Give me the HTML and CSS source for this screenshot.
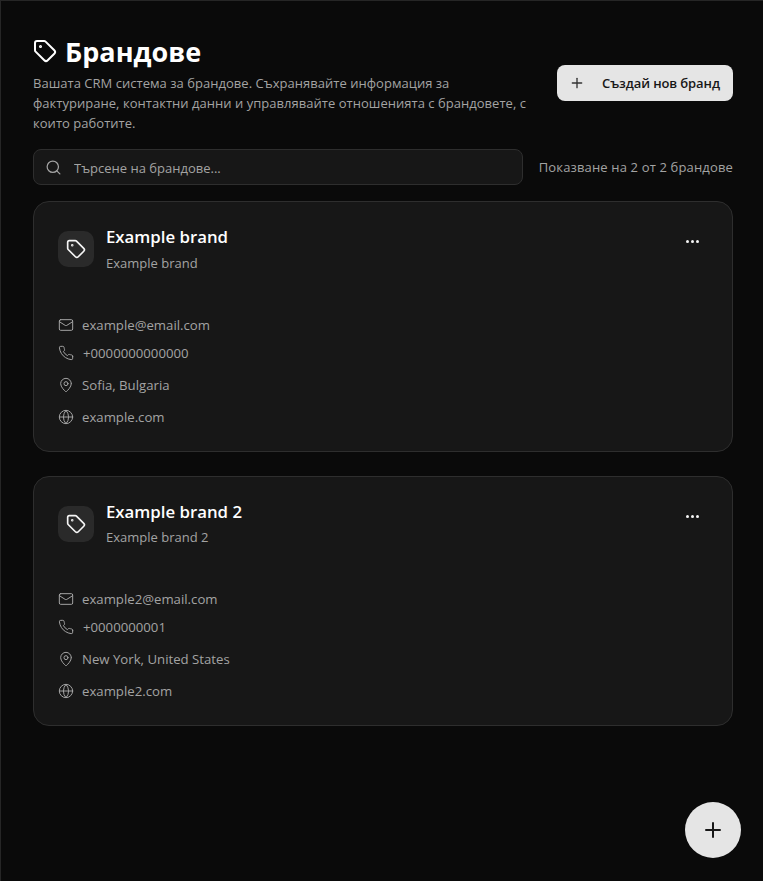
FILE: index.html
```html
<!DOCTYPE html>
<html lang="bg">
<head>
    <meta name="viewport" content="width=device-width, initial-scale=1.0">
    <title>Брандове</title>
    <link rel="stylesheet" href="styles.css">
</head>
<body>
    <svg class="icon-defs" width="0" height="0">
        <symbol id="i-tag" viewBox="0 0 24 24"><path d="M12.586 2.586A2 2 0 0 0 11.172 2H4a2 2 0 0 0-2 2v7.172a2 2 0 0 0 .586 1.414l8.704 8.704a2.426 2.426 0 0 0 3.42 0l6.58-6.58a2.426 2.426 0 0 0 0-3.42z"/><circle cx="7.5" cy="7.5" r=".5" fill="currentColor"/></symbol>
        <symbol id="i-mail" viewBox="0 0 24 24"><rect x="2" y="4" width="20" height="16" rx="2"/><path d="m22 7-8.97 5.7a1.94 1.94 0 0 1-2.06 0L2 7"/></symbol>
        <symbol id="i-phone" viewBox="0 0 24 24"><path d="M22 16.92v3a2 2 0 0 1-2.18 2 19.79 19.79 0 0 1-8.63-3.07 19.5 19.5 0 0 1-6-6 19.79 19.79 0 0 1-3.07-8.67A2 2 0 0 1 4.11 2h3a2 2 0 0 1 2 1.72 12.84 12.84 0 0 0 .7 2.81 2 2 0 0 1-.45 2.11L8.09 9.91a16 16 0 0 0 6 6l1.27-1.27a2 2 0 0 1 2.11-.45 12.84 12.84 0 0 0 2.81.7A2 2 0 0 1 22 16.92z"/></symbol>
        <symbol id="i-pin" viewBox="0 0 24 24"><path d="M20 10c0 4.993-5.539 10.193-7.399 11.799a1 1 0 0 1-1.202 0C9.539 20.193 4 14.993 4 10a8 8 0 0 1 16 0"/><circle cx="12" cy="10" r="3"/></symbol>
        <symbol id="i-globe" viewBox="0 0 24 24"><circle cx="12" cy="12" r="10"/><path d="M12 2a14.5 14.5 0 0 0 0 20 14.5 14.5 0 0 0 0-20"/><path d="M2 12h20"/></symbol>
        <symbol id="i-plus" viewBox="0 0 24 24"><path d="M5 12h14"/><path d="M12 5v14"/></symbol>
        <symbol id="i-search" viewBox="0 0 24 24"><circle cx="11" cy="11" r="8"/><path d="m21 21-4.3-4.3"/></symbol>
    </svg>

    <div class="page">
        <div class="top">
            <div class="top-text">
                <h1 class="title">
                    <svg class="title-icon"><use href="#i-tag"/></svg>
                    <span>Брандове</span>
                </h1>
                <p class="intro">Вашата CRM система за брандове. Съхранявайте информация за фактуриране, контактни данни и управлявайте отношенията с брандовете, с които работите.</p>
            </div>
            <button class="create-btn">
                <svg class="create-icon"><use href="#i-plus"/></svg>
                <span>Създай нов бранд</span>
            </button>
        </div>

        <div class="filter">
            <label class="search">
                <svg class="search-icon"><use href="#i-search"/></svg>
                <input class="search-input" type="text" placeholder="Търсене на брандове...">
            </label>
            <span class="count">Показване на 2 от 2 брандове</span>
        </div>

        <div class="card">
            <div class="card-head">
                <div class="brand-icon"><svg class="brand-svg"><use href="#i-tag"/></svg></div>
                <div class="brand-names">
                    <h2 class="brand-name">Example brand</h2>
                    <p class="brand-sub">Example brand</p>
                </div>
                <button class="more" aria-label="Още"><i></i><i></i><i></i></button>
            </div>
            <ul class="contacts">
                <li class="row row-mail"><svg class="row-icon"><use href="#i-mail"/></svg>example@email.com</li>
                <li class="row row-phone"><svg class="row-icon"><use href="#i-phone"/></svg>+0000000000000</li>
                <li class="row"><svg class="row-icon"><use href="#i-pin"/></svg>Sofia, Bulgaria</li>
                <li class="row"><svg class="row-icon"><use href="#i-globe"/></svg>example.com</li>
            </ul>
        </div>

        <div class="card">
            <div class="card-head">
                <div class="brand-icon"><svg class="brand-svg"><use href="#i-tag"/></svg></div>
                <div class="brand-names">
                    <h2 class="brand-name">Example brand 2</h2>
                    <p class="brand-sub">Example brand 2</p>
                </div>
                <button class="more" aria-label="Още"><i></i><i></i><i></i></button>
            </div>
            <ul class="contacts">
                <li class="row row-mail"><svg class="row-icon"><use href="#i-mail"/></svg>example2@email.com</li>
                <li class="row row-phone"><svg class="row-icon"><use href="#i-phone"/></svg>+0000000001</li>
                <li class="row"><svg class="row-icon"><use href="#i-pin"/></svg>New York, United States</li>
                <li class="row"><svg class="row-icon"><use href="#i-globe"/></svg>example2.com</li>
            </ul>
        </div>
    </div>

    <button class="fab" aria-label="Създай"><svg class="fab-icon"><use href="#i-plus"/></svg></button>
</body>
</html>
```

FILE: styles.css
```css
* {
    margin: 0;
    padding: 0;
    box-sizing: border-box;
}
html, body {
    height: 100%;
}
body {
    background: #0a0a0a;
    border-top: 1px solid #262626;
    border-left: 1px solid #262626;
    font-family: "Open Sans", "Noto Sans", sans-serif;
    color: #a3a3a3;
    overflow: hidden;
}
svg {
    fill: none;
    stroke: currentColor;
    stroke-width: 2;
    stroke-linecap: round;
    stroke-linejoin: round;
    flex-shrink: 0;
}
.icon-defs {
    position: absolute;
}
.page {
    padding: 32px 30px 0 32px;
}
.top {
    display: flex;
    align-items: center;
    justify-content: space-between;
}
.top-text {
    width: 498px;
}
.title {
    display: flex;
    align-items: center;
    gap: 8px;
    height: 40px;
    padding-bottom: 4px;
    font-size: 27px;
    font-weight: 700;
    color: #fff;
}
.title-icon {
    width: 24px;
    height: 24px;
}
.intro {
    font-size: 13px;
    line-height: 20px;
    letter-spacing: 0.03px;
}
.create-btn {
    display: flex;
    align-items: center;
    gap: 17px;
    width: 176px;
    height: 36px;
    padding: 0 12px;
    background: #e5e5e5;
    border: none;
    border-radius: 8px;
    color: #171717;
    font-family: inherit;
    font-size: 13px;
    font-weight: 600;
    letter-spacing: -0.1px;
    white-space: nowrap;
}
.create-icon {
    width: 16px;
    height: 16px;
    color: #333;
}
.filter {
    display: flex;
    align-items: center;
    justify-content: space-between;
    margin-top: 16px;
}
.search {
    display: flex;
    align-items: center;
    gap: 12px;
    width: 490px;
    height: 36px;
    padding: 0 11px;
    background: #171717;
    border: 1px solid #2e2e2e;
    border-radius: 8px;
}
.search-icon {
    width: 17px;
    height: 17px;
    stroke-width: 1.75;
}
.search-input {
    flex: 1;
    padding-top: 1px;
    background: none;
    border: none;
    outline: none;
    font-family: inherit;
    font-size: 13px;
}
.search-input::placeholder {
    color: #a3a3a3;
    opacity: 1;
}
.count {
    font-size: 13px;
    letter-spacing: 0.15px;
    white-space: nowrap;
}
.card {
    height: 250px;
    margin-top: 24px;
    padding: 24px;
    background: #171717;
    border: 1px solid #2e2e2e;
    border-radius: 16px;
}
.filter + .card {
    margin-top: 16px;
    height: 251px;
}
.card-head {
    display: flex;
    align-items: flex-start;
    gap: 12px;
    padding-top: 5px;
}
.brand-icon {
    display: flex;
    align-items: center;
    justify-content: center;
    width: 36px;
    height: 36px;
    background: #2a2a2a;
    border-radius: 10px;
    color: #f5f5f5;
}
.brand-svg {
    width: 20px;
    height: 20px;
}
.brand-names {
    flex: 1;
}
.brand-name {
    margin-top: -6px;
    font-size: 16.8px;
    line-height: 24px;
    font-weight: 600;
    color: #fff;
}
.brand-sub {
    margin-top: 4px;
    font-size: 13px;
    line-height: 18px;
}
.filter + .card .brand-sub {
    margin-top: 5px;
}
.more {
    display: flex;
    gap: 2px;
    margin: 9px 9px 0 0;
    background: none;
    border: none;
}
.more i {
    width: 3px;
    height: 3px;
    background: #f5f5f5;
    border-radius: 50%;
}
.contacts {
    list-style: none;
    margin-top: 39px;
}
.row {
    display: flex;
    align-items: center;
    gap: 8px;
    height: 32px;
    font-size: 13.2px;
}
.row-mail {
    height: 28px;
}
.row-phone {
    height: 28px;
    gap: 9px;
}
.row-phone + .row {
    margin-top: 2px;
}
.row-icon {
    width: 16px;
    height: 16px;
    stroke-width: 1.5;
}
.fab {
    position: fixed;
    right: 22px;
    bottom: 23px;
    display: flex;
    align-items: center;
    justify-content: center;
    width: 56px;
    height: 56px;
    background: #e5e5e5;
    border: none;
    border-radius: 50%;
    color: #171717;
}
.fab-icon {
    width: 24px;
    height: 24px;
}
```
